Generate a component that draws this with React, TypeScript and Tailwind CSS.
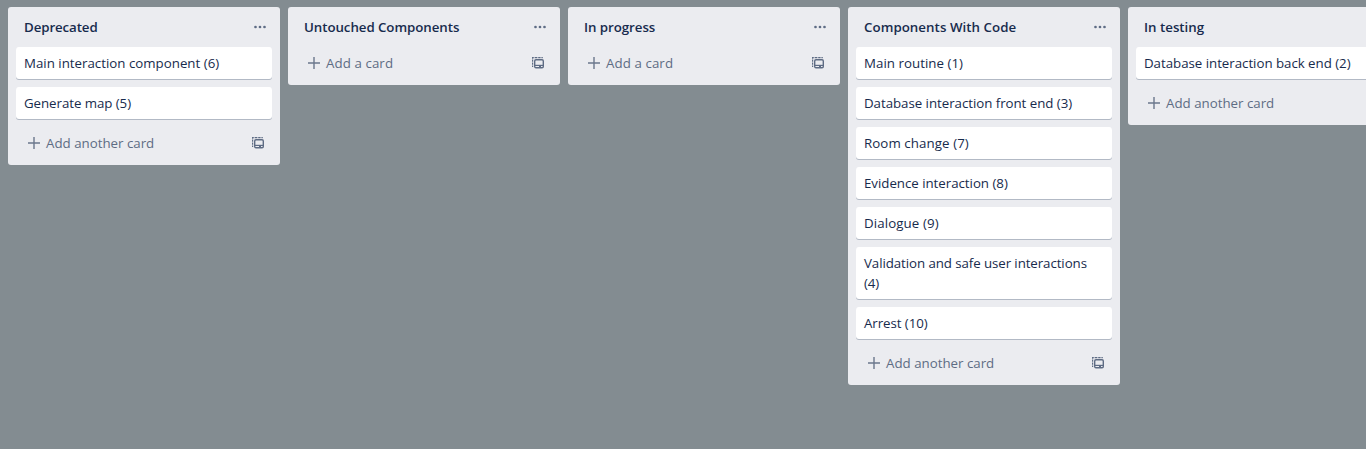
type Card = { title: string; fit?: string };
type List = { title: string; fit?: string; cards: Card[] };

const lists: List[] = [
  {
    title: 'Deprecated',
    fit: 'tracking-[-0.1px]',
    cards: [
      { title: 'Main interaction component (6)' },
      { title: 'Generate map (5)', fit: 'tracking-[-0.06px]' },
    ],
  },
  { title: 'Untouched Components', fit: 'tracking-[-0.06px]', cards: [] },
  { title: 'In progress', fit: 'tracking-[-0.05px]', cards: [] },
  {
    title: 'Components With Code',
    fit: 'tracking-[0.05px]',
    cards: [
      { title: 'Main routine (1)', fit: 'tracking-[0.03px]' },
      { title: 'Database interaction front end (3)', fit: 'tracking-[-0.04px]' },
      { title: 'Room change (7)', fit: 'tracking-[0.08px]' },
      { title: 'Evidence interaction (8)', fit: 'tracking-[-0.03px]' },
      { title: 'Dialogue (9)', fit: 'tracking-[0.1px]' },
      { title: 'Validation and safe user interactions (4)', fit: 'tracking-[-0.08px]' },
      { title: 'Arrest (10)', fit: 'tracking-[-0.06px]' },
    ],
  },
  {
    title: 'In testing',
    cards: [{ title: 'Database interaction back end (2)', fit: 'tracking-[-0.03px]' }],
  },
];

function DotsIcon() {
  return (
    <svg width="14" height="4" viewBox="0 0 14 4" className="fill-[#5e6c84]">
      <circle cx="2.5" cy="2" r="1.35" />
      <circle cx="7" cy="2" r="1.35" />
      <circle cx="11.5" cy="2" r="1.35" />
    </svg>
  );
}

function PlusIcon() {
  return (
    <svg width="12" height="12" viewBox="0 0 12 12" className="fill-[#6b778c]">
      <path d="M5.3 0h1.4v5.3H12v1.4H6.7V12H5.3V6.7H0V5.3h5.3z" />
    </svg>
  );
}

function TemplateIcon() {
  return (
    <svg width="12" height="12" viewBox="0 0 12 12" fill="none" className="stroke-[#5e6c84]">
      <path
        d="M0 .6h1.8M2.6 .6h2.8M6.2 .6h2.4M9.4 .6h1.4M.6 0v1.8M.6 2.6v2.2M.6 5.6v2.2M.6 8.6v1M0 9.5h1.2"
        strokeWidth="1.2"
      />
      <rect x="2.7" y="2.7" width="8.6" height="8" rx="1.3" strokeWidth="1.4" />
      <path d="M2.6 8.4h8.8" strokeWidth="1.2" />
      <path d="M7 9.5h2" strokeWidth="1.8" />
    </svg>
  );
}

function ListColumn({ list }: { list: List }) {
  return (
    <section className="w-[272px] shrink-0 rounded-[3px] bg-[#ebecf0] px-2 pb-1.5">
      <header className="flex h-10 items-center justify-between pr-[5px] pl-2">
        <h2 className="text-[13.3px] leading-5 font-semibold whitespace-nowrap">
          <span className={list.fit}>{list.title}</span>
        </h2>
        <DotsIcon />
      </header>
      {list.cards.map((card) => (
        <article
          key={card.title}
          className="mb-2 rounded-[3px] bg-white px-2 py-1.5 text-[13.3px] leading-5 shadow-[0_1px_0_#091e4240]"
        >
          <span className={card.fit}>{card.title}</span>
        </article>
      ))}
      <footer className="flex h-8 items-center justify-between pr-2 pl-3 text-[#5e6c84]">
        <button className="flex items-center gap-1.5 text-[13.3px] leading-5">
          <PlusIcon />
          {list.cards.length > 0 ? (
            <span>Add another card</span>
          ) : (
            <span className="tracking-[0.08px]">Add a card</span>
          )}
        </button>
        <TemplateIcon />
      </footer>
    </section>
  );
}

export default function App() {
  return (
    <main className="flex h-screen items-start gap-2 overflow-hidden bg-[#838c91] px-2 pt-[7px] font-['Open_Sans','Noto_Sans',sans-serif] text-[#172b4d]">
      {lists.map((list) => (
        <ListColumn key={list.title} list={list} />
      ))}
    </main>
  );
}
